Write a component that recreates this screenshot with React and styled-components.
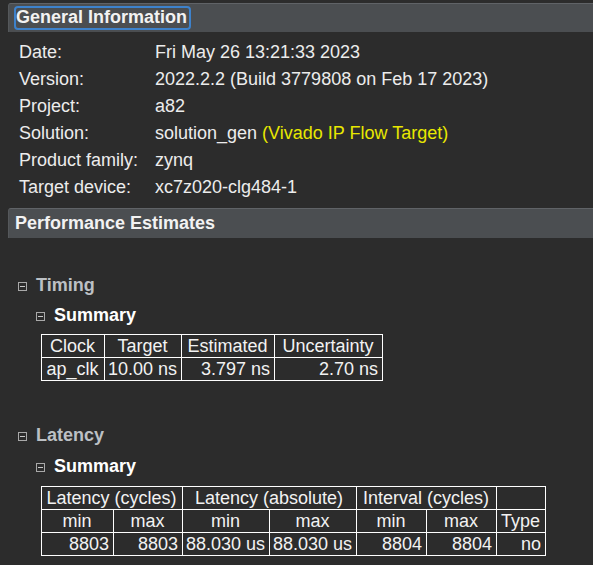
import React from "react";
import styled, { createGlobalStyle } from "styled-components";

const GlobalStyle = createGlobalStyle`
  html, body {
    margin: 0;
    padding: 0;
    background: #2c2c2c;
  }
  body {
    font-family: "Liberation Sans", Arial, sans-serif;
    color: #eeeeee;
  }
`;

const Page = styled.div`
  padding: 3px 0 0 8px;
  width: 585px;
  height: 562px;
  overflow: hidden;
`;

const SectionBar = styled.div`
  display: flex;
  align-items: center;
  height: ${(p) => p.$height}px;
  box-sizing: border-box;
  margin-top: ${(p) => p.$top || 0}px;
  padding-left: ${(p) => (p.$focused ? 5 : 6)}px;
  background: #4b4e51;
  border-top: 1px solid #606367;
  border-left: 1px solid #55585b;
  border-top-left-radius: 3px;
`;

const BarTitle = styled.span`
  font-size: 18px;
  font-weight: bold;
  color: #f2f2f2;
  line-height: 19px;
  padding: 0 2px 1px 0;
  border: 2px solid ${(p) => (p.$focused ? "#3d82cc" : "transparent")};
  border-radius: 4px;
  margin-left: ${(p) => (p.$focused ? 0 : -2)}px;
`;

const InfoList = styled.div`
  display: grid;
  grid-template-columns: 136px 1fr;
  padding-left: 11px;
  margin-top: 7px;
  font-size: 18px;
  line-height: 27px;
`;

const Label = styled.div`
  color: #ececec;
  white-space: nowrap;
`;

const Value = styled.div`
  color: #ececec;
  white-space: nowrap;
`;

const Note = styled.span`
  color: #e8e800;
`;

const Heading = styled.div`
  display: flex;
  align-items: center;
  gap: 9px;
  margin-top: ${(p) => p.$top}px;
  padding-left: ${(p) => p.$indent}px;
  font-size: 18px;
  font-weight: bold;
  line-height: 29px;
  color: ${(p) => (p.$sub ? "#ffffff" : "#bcc0c4")};
`;

const Toggle = styled.span`
  position: relative;
  width: 9px;
  height: 9px;
  box-sizing: border-box;
  border: 1px solid #a9a9a9;
  margin-top: 2px;
  flex: none;

  &::after {
    content: "";
    position: absolute;
    left: 1px;
    right: 1px;
    top: 3px;
    height: 1px;
    background: #c8c8c8;
  }
`;

const Table = styled.table`
  border-collapse: collapse;
  table-layout: fixed;
  margin: ${(p) => p.$top}px 0 0 33px;
  font-size: 18px;
  color: #f2f2f2;

  td, th {
    border: 1px solid #ffffff;
    height: 23px;
    padding: 0 4px 0 3px;
    line-height: 21px;
    font-weight: normal;
    white-space: nowrap;
    overflow: hidden;
    box-sizing: border-box;
  }
  th {
    text-align: center;
  }
`;

const Cell = styled.td`
  text-align: ${(p) => p.$align || "right"};
`;

const timingCols = [63, 77, 93, 108];
const latencyCols = [72, 69, 87, 87, 70, 70, 49];

const info = [
  ["Date:", "Fri May 26 13:21:33 2023"],
  ["Version:", "2022.2.2 (Build 3779808 on Feb 17 2023)"],
  ["Project:", "a82"],
  ["Solution:", <>solution_gen <Note>(Vivado IP Flow Target)</Note></>],
  ["Product family:", "zynq"],
  ["Target device:", "xc7z020-clg484-1"],
];

const Cols = ({ widths }) => (
  <colgroup>
    {widths.map((w, i) => (
      <col key={i} style={{ width: w }} />
    ))}
  </colgroup>
);

const App = () => {
  return (
    <>
      <GlobalStyle />
      <Page>
        <SectionBar $height={29} $focused>
          <BarTitle $focused>General Information</BarTitle>
        </SectionBar>
        <InfoList>
          {info.map(([label, value]) => (
            <React.Fragment key={label}>
              <Label>{label}</Label>
              <Value>{value}</Value>
            </React.Fragment>
          ))}
        </InfoList>

        <SectionBar $height={30} $top={7}>
          <BarTitle>Performance Estimates</BarTitle>
        </SectionBar>

        <Heading $top={33} $indent={10}>
          <Toggle />
          Timing
        </Heading>
        <Heading $top={1} $indent={28} $sub>
          <Toggle />
          Summary
        </Heading>
        <Table $top={4} style={{ width: 341 }}>
          <Cols widths={timingCols} />
          <tbody>
            <tr>
              <th>Clock</th>
              <th>Target</th>
              <th>Estimated</th>
              <th>Uncertainty</th>
            </tr>
            <tr>
              <Cell $align="center">ap_clk</Cell>
              <Cell $align="center">10.00 ns</Cell>
              <Cell>3.797 ns</Cell>
              <Cell>2.70 ns</Cell>
            </tr>
          </tbody>
        </Table>

        <Heading $top={40} $indent={10}>
          <Toggle />
          Latency
        </Heading>
        <Heading $top={2} $indent={28} $sub>
          <Toggle />
          Summary
        </Heading>
        <Table $top={5} style={{ width: 504 }}>
          <Cols widths={latencyCols} />
          <tbody>
            <tr>
              <th colSpan={2}>Latency (cycles)</th>
              <th colSpan={2}>Latency (absolute)</th>
              <th colSpan={2}>Interval (cycles)</th>
              <th></th>
            </tr>
            <tr>
              <th>min</th>
              <th>max</th>
              <th>min</th>
              <th>max</th>
              <th>min</th>
              <th>max</th>
              <th>Type</th>
            </tr>
            <tr>
              <Cell>8803</Cell>
              <Cell>8803</Cell>
              <Cell $align="center">88.030 us</Cell>
              <Cell $align="center">88.030 us</Cell>
              <Cell>8804</Cell>
              <Cell>8804</Cell>
              <Cell>no</Cell>
            </tr>
          </tbody>
        </Table>
      </Page>
    </>
  );
};

export default App;
